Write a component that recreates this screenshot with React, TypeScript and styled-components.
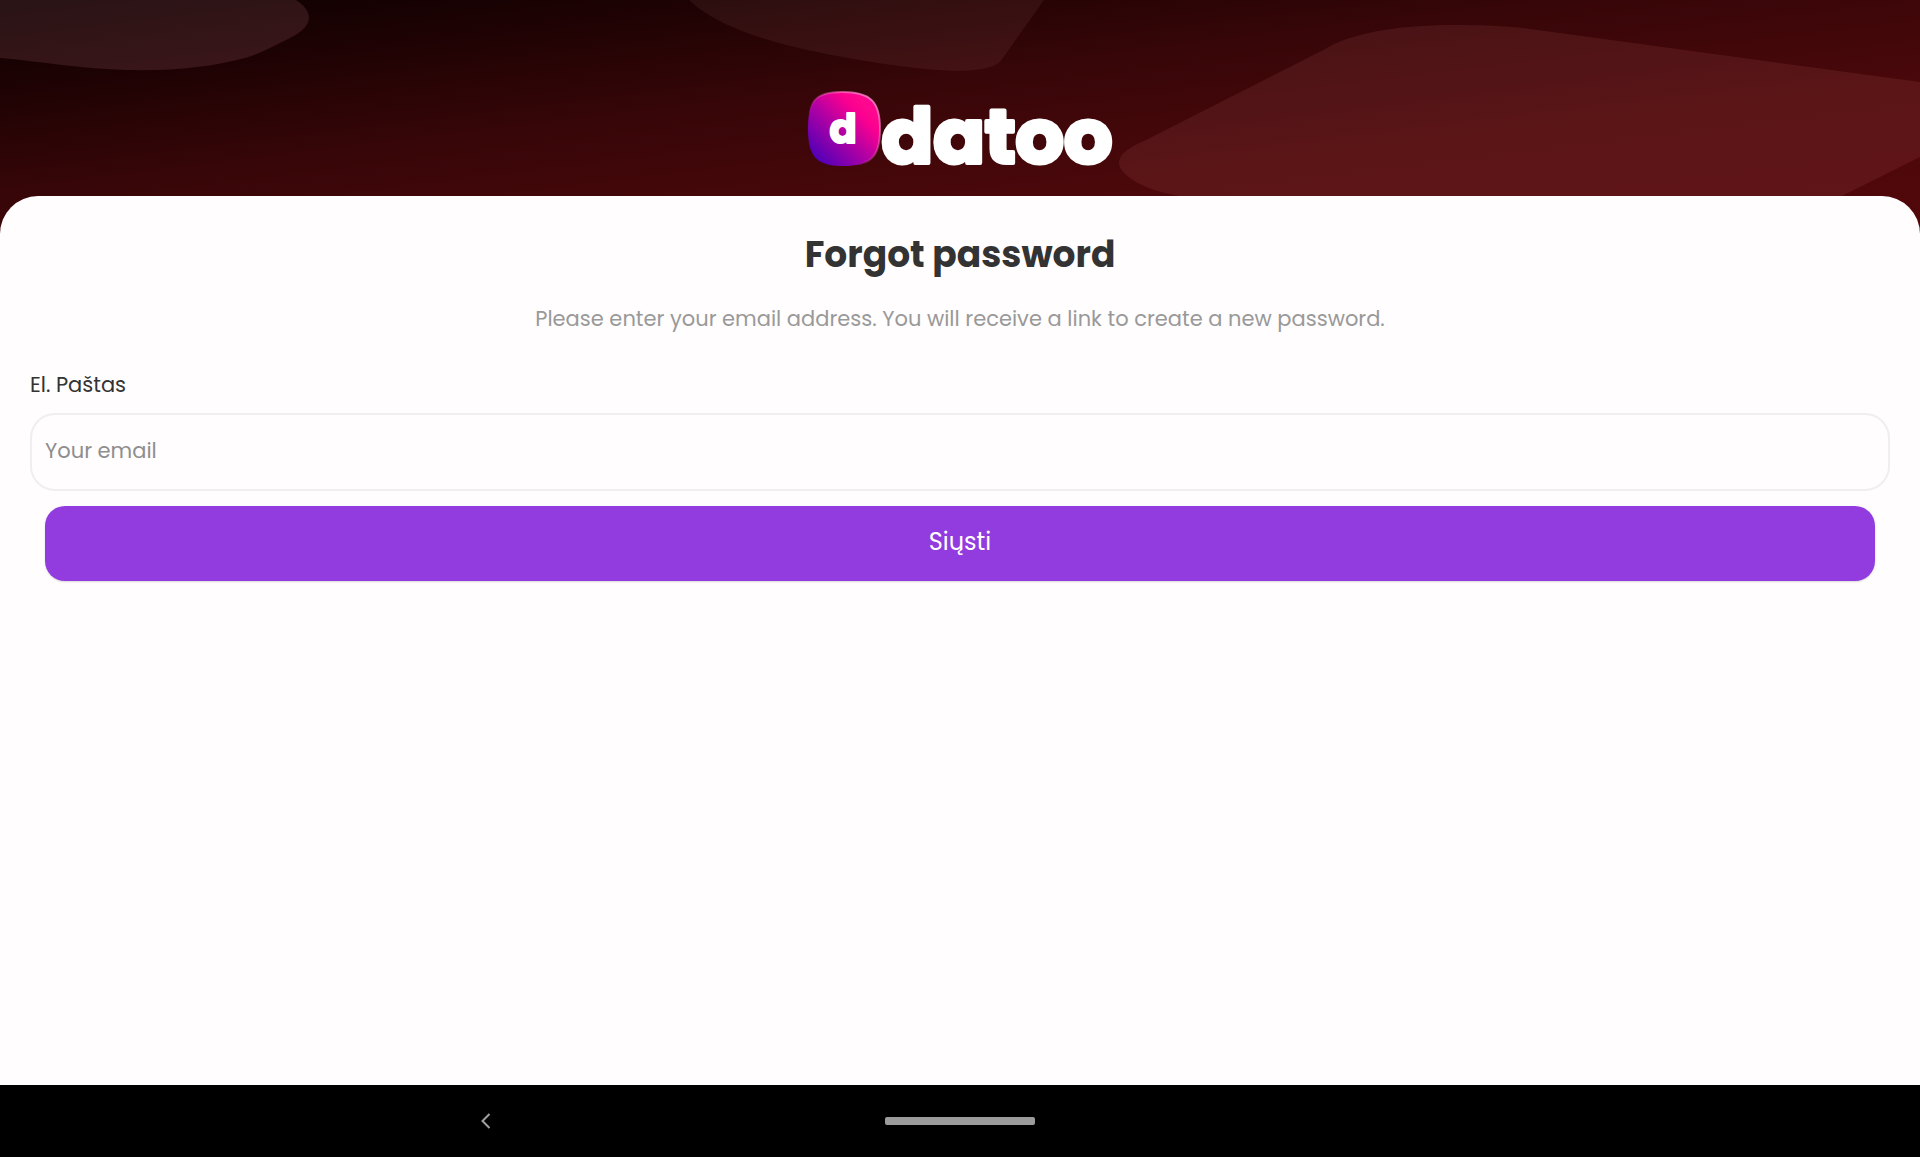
import React, { useState } from "react";
import styled, { createGlobalStyle } from "styled-components";

const GlobalStyle = createGlobalStyle`
  *, *::before, *::after { box-sizing: border-box; }
  body {
    margin: 0;
    background: #000;
    font-family: Poppins, Inter, "Noto Sans", sans-serif;
  }
`;

const Screen = styled.div`
  display: flex;
  flex-direction: column;
  min-height: 100vh;
`;

const Content = styled.div`
  position: relative;
  flex: 1;
  display: flex;
  flex-direction: column;
  background: #fffdfe;
`;

const Backdrop = styled.div`
  position: absolute;
  top: 0;
  left: 0;
  right: 0;
  height: 240px;
  background: linear-gradient(173deg, #0c0000 0%, #1c0203 17%, #380608 42%, #4c080b 70%, #520709 100%);

  svg {
    display: block;
    width: 100%;
    height: 100%;
  }
`;

const Header = styled.header`
  position: relative;
  display: flex;
  justify-content: center;
  padding: 88px 24px 24px;

  svg {
    display: block;
    width: 310px;
    height: 84px;
    overflow: visible;
  }
`;

const Sheet = styled.main`
  position: relative;
  flex: 1;
  padding: 37px 30px 24px;
  border-radius: 38px 38px 0 0;
  background: #fffdfe;
`;

const Title = styled.h1`
  margin: 0;
  color: #333;
  font-size: 36px;
  font-weight: 700;
  line-height: 44px;
  text-align: center;
`;

const Hint = styled.p`
  margin: 26px 0 0;
  color: #999;
  font-size: 21px;
  line-height: 32px;
  text-align: center;
`;

const Form = styled.form`
  display: flex;
  flex-direction: column;
  margin-top: 33px;
`;

const Label = styled.label`
  color: #333;
  font-size: 21px;
  line-height: 34px;
`;

const Field = styled.input`
  height: 78px;
  margin-top: 11px;
  padding: 0 13px 4px;
  border: 2px solid #f0eff0;
  border-radius: 25px;
  background: transparent;
  color: #333;
  font: inherit;
  font-size: 21px;
  outline: none;

  &::placeholder {
    color: #8e8e8e;
    opacity: 1;
  }
`;

const Submit = styled.button`
  height: 75px;
  margin: 15px 15px 0;
  padding: 0 16px 5px;
  border: 0;
  border-radius: 20px;
  background: #923bdf;
  box-shadow: 0 1px 2px rgba(0, 0, 0, 0.15);
  color: #fff;
  font: inherit;
  font-size: 24px;
  cursor: pointer;
`;

const SystemBar = styled.nav`
  display: grid;
  grid-template-columns: 1fr 150px 1fr;
  align-items: center;
  justify-items: center;
  height: 72px;
  padding: 0 87px;
  background: #000;
`;

const BarButton = styled.button`
  display: flex;
  align-items: center;
  justify-content: center;
  padding: 12px 0;
  border: 0;
  background: none;
  color: #a0a0a0;
  cursor: pointer;
`;

const HomeHandle = styled.span`
  width: 150px;
  height: 8px;
  border-radius: 2px;
  background: #9b9b9b;
`;

function Shapes() {
  return (
    <svg viewBox="0 0 1920 240" preserveAspectRatio="none" aria-hidden="true">
      <path
        fill="#ffa6b4"
        fillOpacity="0.12"
        d="M0 0H296C304 5 309 11 309 18C309 27 298 35 282 42C268 49 258 54 245 58C212 67 174 71 127 70C82 69 45 62 0 58Z"
      />
      <path
        fill="#ffb4b8"
        fillOpacity="0.07"
        d="M689 0C710 21 756 39 803 49C852 60 910 69 954 71C977 71 994 68 1000 62L1044 0Z"
      />
      <path
        fill="#ff9098"
        fillOpacity="0.095"
        d="M1179 196C1139 189 1118 173 1119 162C1120 153 1130 147 1144 141L1325 49C1355 31 1405 25 1455 25C1485 25 1512 26 1538 30L1920 82V157L1842 196L1760 240H1300Z"
      />
    </svg>
  );
}

function Logo() {
  return (
    <svg viewBox="0 0 310 84" role="img" aria-label="datoo">
      <defs>
        <linearGradient id="tile" x1="0.12" y1="0.92" x2="0.82" y2="0.2">
          <stop offset="0" stopColor="#5000b8" />
          <stop offset="0.5" stopColor="#b000a4" />
          <stop offset="0.86" stopColor="#fb0090" />
          <stop offset="1" stopColor="#ff078e" />
        </linearGradient>
        <linearGradient id="rim" x1="0" y1="1" x2="1" y2="0">
          <stop offset="0.35" stopColor="#ff7ac8" stopOpacity="0" />
          <stop offset="1" stopColor="#ff85cc" />
        </linearGradient>
      </defs>
      <path
        d="M37 4C66 4 75 14 75 41C75 69 66 78 38 78C11 78 3 68 3 41C3 13 10 4 37 4Z"
        fill="url(#tile)"
        stroke="url(#rim)"
        strokeWidth="2"
      />
      <g fill="#fff" stroke="#fff" strokeLinejoin="round" fontFamily="Poppins, Inter, sans-serif" fontWeight="700">
        <text x="38" y="55" fontSize="40" strokeWidth="2" textAnchor="middle">d</text>
        <text x="192" y="75" fontSize="76" strokeWidth="4" textAnchor="middle">datoo</text>
      </g>
    </svg>
  );
}

export default function App() {
  const [email, setEmail] = useState("");

  return (
    <Screen>
      <GlobalStyle />
      <Content>
        <Backdrop>
          <Shapes />
        </Backdrop>
        <Header>
          <Logo />
        </Header>
        <Sheet>
          <Title>Forgot password</Title>
          <Hint>Please enter your email address. You will receive a link to create a new password.</Hint>
          <Form onSubmit={(event) => event.preventDefault()}>
            <Label htmlFor="email">El. Paštas</Label>
            <Field
              id="email"
              type="email"
              placeholder="Your email"
              value={email}
              onChange={(event) => setEmail(event.target.value)}
            />
            <Submit type="submit">Siųsti</Submit>
          </Form>
        </Sheet>
      </Content>
      <SystemBar>
        <BarButton type="button" aria-label="Back">
          <svg width="10" height="16" viewBox="0 0 10 16" fill="none" stroke="currentColor" strokeWidth="2">
            <path d="M8.5 1L1.5 8L8.5 15" />
          </svg>
        </BarButton>
        <BarButton type="button" aria-label="Home">
          <HomeHandle />
        </BarButton>
      </SystemBar>
    </Screen>
  );
}
